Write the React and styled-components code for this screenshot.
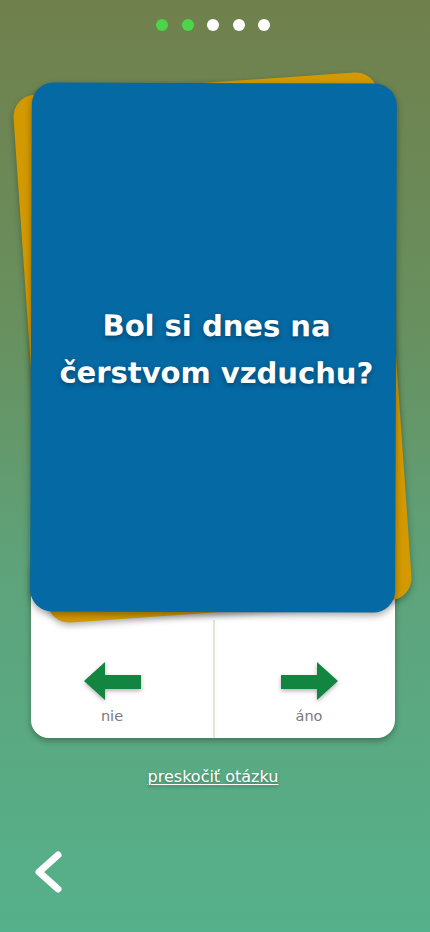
import React from "react";
import styled, { createGlobalStyle } from "styled-components";

const GlobalStyle = createGlobalStyle`
  html, body { margin: 0; padding: 0; }
  body { font-family: "DejaVu Sans", "Open Sans", sans-serif; }
  * { box-sizing: border-box; }
`;

const Page = styled.div`
  width: 430px;
  min-height: 932px;
  padding-right: 4px;
  background: linear-gradient(180deg, #70804c 0%, #68905f 35%, #5ea37b 62%, #55b18b 100%);
  display: flex;
  flex-direction: column;
  align-items: center;
  overflow: hidden;
`;

const Dots = styled.div`
  display: flex;
  gap: 13.5px;
  margin-top: 19px;
`;

const Dot = styled.span`
  width: 12px;
  height: 12px;
  border-radius: 50%;
  background: ${(p) => (p.$done ? "#4cd44a" : "#ffffff")};
`;

const Stack = styled.div`
  position: relative;
  z-index: 2;
  width: 365px;
  height: 529px;
  margin-top: 52px;
`;

const BackCard = styled.div`
  position: absolute;
  inset: 0;
  border-radius: 22px;
  background: #d29900;
  transform: translate(-1px, 0) rotate(-4deg);
  box-shadow: 0 3px 6px rgba(0, 0, 0, 0.3);
`;

const FrontCard = styled.div`
  position: absolute;
  inset: 0;
  border-radius: 22px;
  background: #0569a3;
  transform: rotate(0.2deg);
  box-shadow: 0 3px 7px rgba(0, 0, 0, 0.35);
  display: flex;
  align-items: center;
  justify-content: center;
  padding: 0 14px 0 20px;
`;

const Question = styled.h1`
  margin: 0;
  color: #ffffff;
  font-family: "DejaVu Sans", sans-serif;
  font-weight: 700;
  font-size: 29px;
  line-height: 47px;
  text-align: center;
  letter-spacing: 0;
  text-shadow: 0 2px 5px rgba(0, 0, 0, 0.35);
  padding-top: 4px;
`;

const Panel = styled.div`
  position: relative;
  z-index: 1;
  width: 364px;
  margin-top: -60px;
  padding-top: 68px;
  background: #ffffff;
  border-radius: 18px;
  box-shadow: 0 3px 6px rgba(0, 0, 0, 0.3);
  display: grid;
  grid-template-columns: 1fr 1fr;
`;

const Answer = styled.button`
  height: 118px;
  border: none;
  background: transparent;
  display: flex;
  flex-direction: column;
  align-items: center;
  justify-content: flex-end;
  gap: 6px;
  padding: 0 ${(p) => (p.$side === "left" ? "20px" : "0")} 12px ${(p) => (p.$side === "right" ? "8px" : "0")};
  border-left: ${(p) => (p.$side === "right" ? "2px solid #dcebd6" : "none")};
  cursor: pointer;
`;

const ArrowSvg = styled.svg`
  width: 57px;
  height: 38px;
  filter: drop-shadow(0 2px 2px rgba(0, 0, 0, 0.3));
  transform: ${(p) => (p.$flip ? "scaleX(-1)" : "none")};
`;

const AnswerLabel = styled.span`
  font-family: "DejaVu Sans", sans-serif;
  font-size: 14.5px;
  line-height: 20px;
  color: #7a7a7a;
`;

const SkipLink = styled.a`
  margin-top: 27px;
  font-family: "DejaVu Sans", sans-serif;
  font-size: 16px;
  line-height: 24px;
  color: #ffffff;
  text-decoration: underline;
  text-underline-offset: 2px;
  text-decoration-thickness: 1px;
  text-shadow: 0 2px 3px rgba(0, 0, 0, 0.3);
  cursor: pointer;
`;

const Footer = styled.div`
  align-self: stretch;
  margin-top: 61px;
  padding-left: 34px;
`;

const BackButton = styled.button`
  border: none;
  background: transparent;
  padding: 0;
  width: 30px;
  height: 44px;
  cursor: pointer;
`;

function Arrow({ flip }) {
  return (
    <ArrowSvg $flip={flip} viewBox="0 0 57 38">
      <polygon points="0,19 21,0 21,13 57,13 57,27 21,27 21,38" fill="#128540" />
    </ArrowSvg>
  );
}

export default function App() {
  return (
    <>
      <GlobalStyle />
      <Page>
        <Dots>
          <Dot $done />
          <Dot $done />
          <Dot />
          <Dot />
          <Dot />
        </Dots>
        <Stack>
          <BackCard />
          <FrontCard>
            <Question>
              Bol si dnes na
              <br />
              čerstvom vzduchu?
            </Question>
          </FrontCard>
        </Stack>
        <Panel>
          <Answer $side="left">
            <Arrow />
            <AnswerLabel>nie</AnswerLabel>
          </Answer>
          <Answer $side="right">
            <Arrow flip />
            <AnswerLabel>áno</AnswerLabel>
          </Answer>
        </Panel>
        <SkipLink>preskočiť otázku</SkipLink>
        <Footer>
          <BackButton aria-label="späť">
            <svg width="30" height="44" viewBox="0 0 30 44">
              <polyline
                points="24,5 5,22 24,39"
                fill="none"
                stroke="#ffffff"
                strokeWidth="7"
                strokeLinecap="round"
                strokeLinejoin="round"
              />
            </svg>
          </BackButton>
        </Footer>
      </Page>
    </>
  );
}
